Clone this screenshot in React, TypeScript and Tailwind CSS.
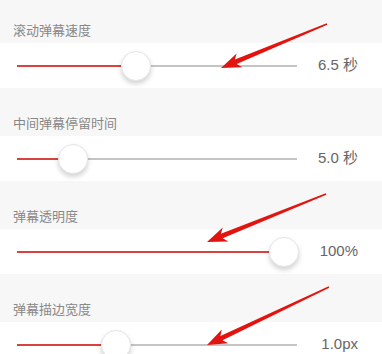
import React from 'react';

type Setting = {
  label: string;
  value: string;
  // thumb centre, px from the track's left edge
  pos: number;
};

const settings: Setting[] = [
  { label: '滚动弹幕速度', value: '6.5 秒', pos: 119 },
  { label: '中间弹幕停留时间', value: '5.0 秒', pos: 56 },
  { label: '弹幕透明度', value: '100%', pos: 267 },
  { label: '弹幕描边宽度', value: '1.0px', pos: 99 },
];

// red annotation arrows: tail -> tip, in page pixels
const arrows = [
  { x1: 327, y1: 24, x2: 221, y2: 68 },
  { x1: 326, y1: 194, x2: 207, y2: 242 },
  { x1: 329, y1: 287, x2: 207, y2: 345 },
];

function arrowPoints(a: { x1: number; y1: number; x2: number; y2: number }) {
  const dx = a.x2 - a.x1;
  const dy = a.y2 - a.y1;
  const len = Math.hypot(dx, dy);
  const ux = dx / len;
  const uy = dy / len;
  const nx = -uy;
  const ny = ux;
  const headLen = 20;
  const at = (d: number, w: number) =>
    `${(a.x1 + ux * d + nx * w).toFixed(1)},${(a.y1 + uy * d + ny * w).toFixed(1)}`;
  const base = len - headLen + 4;
  const barb = len - headLen;
  return [
    at(0, 0.8),
    at(base, 2.4),
    at(barb, 7.5),
    at(len, 0),
    at(barb, -7.5),
    at(base, -2.4),
    at(0, -0.8),
  ].join(' ');
}

function SliderRow({ s }: { s: Setting }) {
  return (
    <div className="h-[45px] bg-white flex items-center pl-[17px] pr-[24px]">
      <div className="relative w-[280px] h-[2px] bg-[#c4c4c4]">
        <div className="absolute left-0 top-0 h-[2px] bg-[#d8433f]" style={{ width: s.pos }} />
        <div
          className="absolute top-1/2 w-[30px] h-[30px] -translate-x-1/2 -translate-y-1/2 rounded-full bg-white border border-[#e6e6e6] shadow-[0_3px_5px_rgba(0,0,0,0.18)]"
          style={{ left: s.pos }}
        />
      </div>
      <span className="ml-auto text-[15px] text-[#666] font-['Liberation_Sans','Noto_Sans_CJK_SC',sans-serif]">
        {s.value}
      </span>
    </div>
  );
}

export default function App() {
  return (
    <div className="relative w-[382px] h-[354px] overflow-hidden bg-[#f7f7f7]">
      <div className="-mt-[5px]">
        {settings.map((s) => (
          <div key={s.label}>
            <div className="h-[48px] flex items-end pl-[13px] pb-[4px]">
              <span className="text-[13px] leading-[18px] text-[#888] font-['Noto_Sans_CJK_SC',sans-serif]">
                {s.label}
              </span>
            </div>
            <SliderRow s={s} />
          </div>
        ))}
      </div>

      <svg className="absolute inset-0 pointer-events-none" width="382" height="354">
        {arrows.map((a, i) => (
          <polygon key={i} points={arrowPoints(a)} fill="#e3140f" />
        ))}
      </svg>
    </div>
  );
}
